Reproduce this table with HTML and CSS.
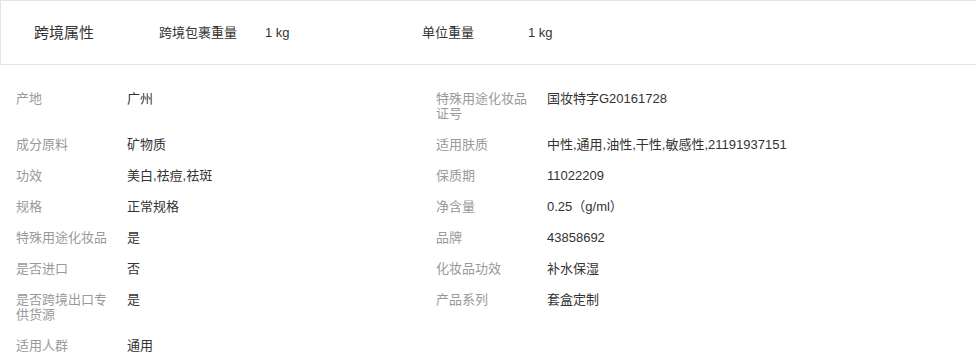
FILE: index.html
```html
<!DOCTYPE html>
<html lang="zh-CN">
<head>
  <meta charset="UTF-8" />
  <title>商品属性</title>
  <link rel="stylesheet" href="styles.css">
</head>
<body>

  <div class="cross-box">
    <span class="cross-title">跨境属性</span>
    <div class="cross-item">
      <span class="cross-label">跨境包裹重量</span>
      <span class="cross-value">1 kg</span>
    </div>
    <div class="cross-item">
      <span class="cross-label">单位重量</span>
      <span class="cross-value">1 kg</span>
    </div>
  </div>

  <div class="attrs">
    <div class="attr"><span class="name">产地</span><span class="value">广州</span></div>
    <div class="attr"><span class="name">特殊用途化妆品证号</span><span class="value">国妆特字G20161728</span></div>

    <div class="attr"><span class="name">成分原料</span><span class="value">矿物质</span></div>
    <div class="attr"><span class="name">适用肤质</span><span class="value">中性,通用,油性,干性,敏感性,21191937151</span></div>

    <div class="attr"><span class="name">功效</span><span class="value">美白,祛痘,祛斑</span></div>
    <div class="attr"><span class="name">保质期</span><span class="value">11022209</span></div>

    <div class="attr"><span class="name">规格</span><span class="value">正常规格</span></div>
    <div class="attr"><span class="name">净含量</span><span class="value">0.25（g/ml）</span></div>

    <div class="attr"><span class="name">特殊用途化妆品</span><span class="value">是</span></div>
    <div class="attr"><span class="name">品牌</span><span class="value">43858692</span></div>

    <div class="attr"><span class="name">是否进口</span><span class="value">否</span></div>
    <div class="attr"><span class="name">化妆品功效</span><span class="value">补水保湿</span></div>

    <div class="attr"><span class="name">是否跨境出口专供货源</span><span class="value">是</span></div>
    <div class="attr"><span class="name">产品系列</span><span class="value">套盒定制</span></div>

    <div class="attr"><span class="name">适用人群</span><span class="value">通用</span></div>
  </div>

</body>
</html>
```

FILE: styles.css
```css
body {
  margin: 0;
  background: #fff;
  font-family: "Liberation Sans", "Noto Sans CJK SC", sans-serif;
  font-size: 13px;
  color: #333;
  overflow: hidden;
}

/* cross-border strip on top */
.cross-box {
  display: flex;
  align-items: center;
  height: 63px;
  border: 1px solid #e5e5e5;
  border-right: none;
  padding-left: 33px;
  line-height: 20px;
}

.cross-title {
  width: 125px;
  font-size: 15px;
  color: #333;
}

.cross-item {
  display: flex;
  align-items: baseline;
  width: 263px;
}

.cross-label {
  width: 106px;
}

/* attribute table, two pairs per row */
.attrs {
  display: grid;
  grid-template-columns: 420px 1fr;
  row-gap: 16px;
  padding: 26px 0 0 16px;
  line-height: 15px;
}

.attr {
  display: flex;
}

.attr .name {
  width: 100px;
  margin-right: 11px;
  color: #999;
}

.attr .value {
  color: #333;
}
```
